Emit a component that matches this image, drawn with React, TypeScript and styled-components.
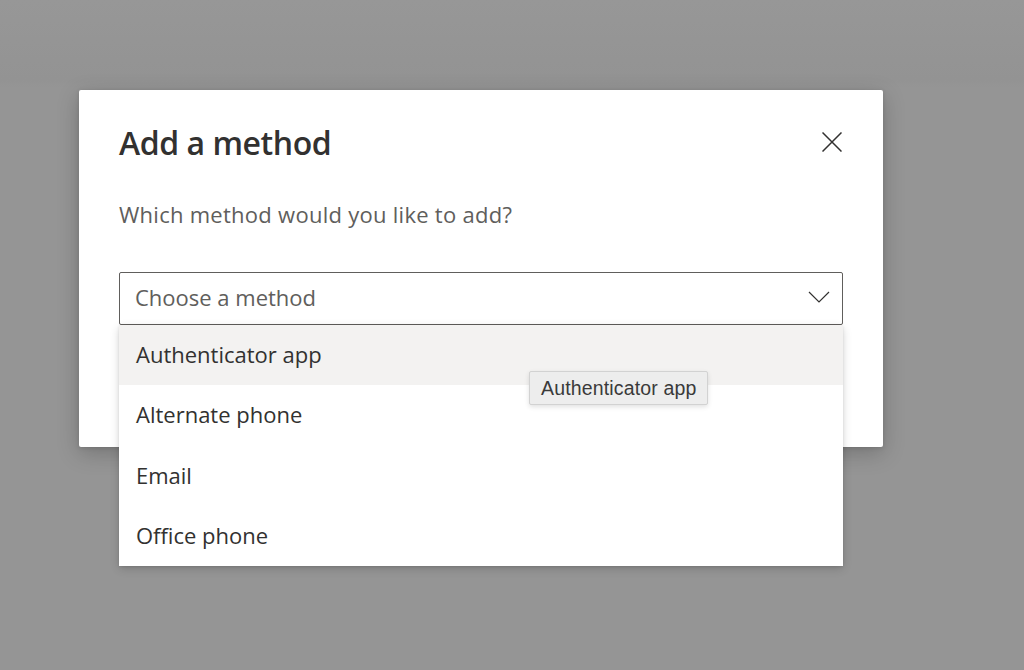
import styled, { createGlobalStyle } from "styled-components";

const GlobalStyle = createGlobalStyle`
  html, body {
    margin: 0;
    padding: 0;
    height: 100%;
  }
  body {
    font-family: "Open Sans", "Noto Sans", sans-serif;
    background: #959595;
  }
`;

const Backdrop = styled.div`
  width: 1024px;
  height: 670px;
  background: linear-gradient(180deg, #979797 0%, #939393 12%, #959595 13%, #959595 100%);
  padding: 90px 0 0 79px;
  box-sizing: border-box;
  overflow: hidden;
`;

const Dialog = styled.div`
  position: relative;
  width: 804px;
  height: 357px;
  background: #ffffff;
  border-radius: 2px;
  box-shadow: 0 6px 22px rgba(0, 0, 0, 0.22), 0 1px 4px rgba(0, 0, 0, 0.12);
  padding: 30px 40px 0 40px;
  box-sizing: border-box;
`;

const Header = styled.div`
  display: flex;
  justify-content: space-between;
  align-items: flex-start;
`;

const Title = styled.h2`
  margin: 0;
  font-size: 32px;
  font-weight: 600;
  color: #323130;
  line-height: 46px;
  letter-spacing: -0.45px;
`;

const CloseButton = styled.button`
  border: none;
  background: none;
  padding: 0;
  margin: 12px 1px 0 0;
  width: 20px;
  height: 20px;
  display: flex;
  align-items: center;
  justify-content: center;
  cursor: pointer;
`;

const Subtitle = styled.p`
  margin: 33px 0 0 0;
  font-size: 22px;
  color: #605e5c;
  line-height: 30px;
  letter-spacing: 0.27px;
`;

const Field = styled.div`
  position: relative;
  margin-top: 43px;
`;

const Select = styled.div`
  height: 53px;
  border: 1px solid #605e5c;
  border-radius: 2px;
  box-sizing: border-box;
  display: flex;
  align-items: center;
  justify-content: space-between;
  padding: 0 12px 3px 15px;
  font-size: 22px;
  color: #605e5c;
`;

const Menu = styled.ul`
  position: absolute;
  left: 0;
  right: 0;
  top: 53px;
  margin: 0;
  padding: 0;
  list-style: none;
  background: #ffffff;
  border-radius: 0 0 2px 2px;
  box-shadow: 0 3px 10px rgba(0, 0, 0, 0.16), 0 1px 3px rgba(0, 0, 0, 0.1);
  z-index: 2;
`;

const Option = styled.li<{ $active?: boolean }>`
  position: relative;
  height: 60.3px;
  display: flex;
  align-items: center;
  padding: 0 17px 2px;
  box-sizing: border-box;
  font-size: 22px;
  color: #323130;
  background: ${(p) => (p.$active ? "#f3f2f1" : "#ffffff")};
`;

const Tooltip = styled.div`
  position: absolute;
  left: 410px;
  top: 46px;
  height: 34px;
  padding: 0 11px;
  display: flex;
  align-items: center;
  background: #ededed;
  border: 1px solid #d2d2d2;
  border-radius: 2px;
  box-sizing: border-box;
  box-shadow: 0 2px 5px rgba(0, 0, 0, 0.12);
  font-family: "Liberation Sans", Arial, sans-serif;
  font-size: 19.5px;
  letter-spacing: 0.15px;
  color: #3a3a3a;
  white-space: nowrap;
  z-index: 3;
`;

const methods = ["Authenticator app", "Alternate phone", "Email", "Office phone"];

export default function App() {
  return (
    <>
      <GlobalStyle />
      <Backdrop>
        <Dialog>
          <Header>
            <Title>Add a method</Title>
            <CloseButton aria-label="Close">
              <svg width="20" height="20" viewBox="0 0 20 20">
                <path d="M0.5 0.5 L19.5 19.5 M19.5 0.5 L0.5 19.5" stroke="#323130" strokeWidth="1.5" fill="none" />
              </svg>
            </CloseButton>
          </Header>
          <Subtitle>Which method would you like to add?</Subtitle>
          <Field>
            <Select>
              <span>Choose a method</span>
              <svg width="22" height="12" viewBox="0 0 22 12">
                <path d="M1 1 L11 11 L21 1" stroke="#323130" strokeWidth="1.2" fill="none" />
              </svg>
            </Select>
            <Menu>
              {methods.map((m, i) => (
                <Option key={m} $active={i === 0}>
                  {m}
                  {i === 0 && <Tooltip>Authenticator app</Tooltip>}
                </Option>
              ))}
            </Menu>
          </Field>
        </Dialog>
      </Backdrop>
    </>
  );
}
